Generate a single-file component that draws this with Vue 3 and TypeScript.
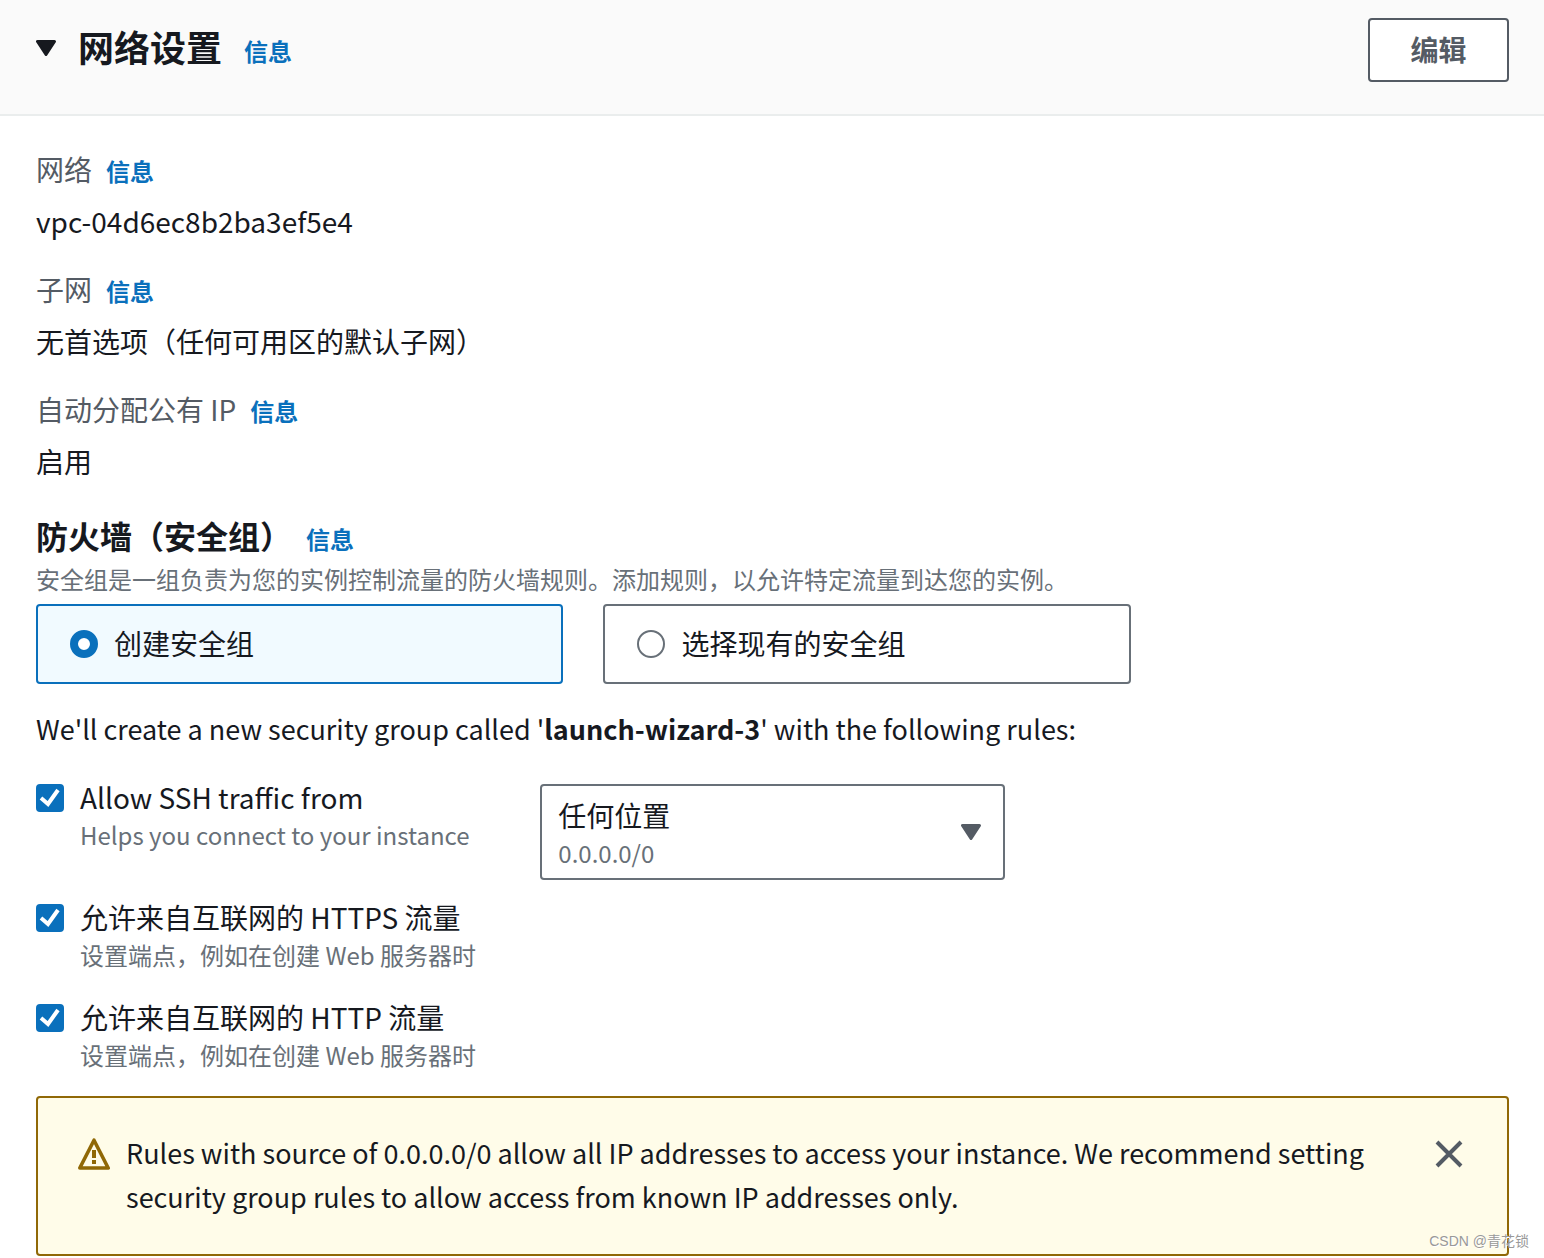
<script setup lang="ts">
import { ref } from 'vue'

interface Field {
  label: string
  value: string
}

interface TrafficRule {
  id: string
  title: string
  description: string
  hasSource: boolean
}

const fields: Field[] = [
  { label: '网络', value: 'vpc-04d6ec8b2ba3ef5e4' },
  { label: '子网', value: '无首选项（任何可用区的默认子网）' },
  { label: '自动分配公有 IP', value: '启用' },
]

const groupOptions = [
  { value: 'create', label: '创建安全组' },
  { value: 'existing', label: '选择现有的安全组' },
]

const rules: TrafficRule[] = [
  { id: 'ssh', title: 'Allow SSH traffic from', description: 'Helps you connect to your instance', hasSource: true },
  { id: 'https', title: '允许来自互联网的 HTTPS 流量', description: '设置端点，例如在创建 Web 服务器时', hasSource: false },
  { id: 'http', title: '允许来自互联网的 HTTP 流量', description: '设置端点，例如在创建 Web 服务器时', hasSource: false },
]

const group = ref('create')
const allowed = ref<string[]>(['ssh', 'https', 'http'])
const expanded = ref(true)
const showAlert = ref(true)
</script>

<template>
  <section class="panel">
    <header class="panel-header">
      <button class="toggle" type="button" aria-label="网络设置" :aria-expanded="expanded" @click="expanded = !expanded">
        <svg class="caret" viewBox="0 0 20 16" aria-hidden="true">
          <path d="M1.5 1.5h17L10 14.5z" fill="currentColor" stroke="currentColor" stroke-width="3" stroke-linejoin="round" />
        </svg>
      </button>
      <h2>网络设置</h2>
      <a class="info" href="#">信息</a>
      <button class="edit" type="button">编辑</button>
    </header>

    <div v-if="expanded" class="panel-body">
      <dl class="fields">
        <div v-for="field in fields" :key="field.label" class="field">
          <dt>{{ field.label }}<a class="info" href="#">信息</a></dt>
          <dd>{{ field.value }}</dd>
        </div>
      </dl>

      <div class="firewall-heading">
        <h3>防火墙（安全组）</h3>
        <a class="info" href="#">信息</a>
      </div>
      <p class="hint">安全组是一组负责为您的实例控制流量的防火墙规则。添加规则，以允许特定流量到达您的实例。</p>

      <div class="tiles" role="radiogroup" aria-label="防火墙（安全组）">
        <label v-for="option in groupOptions" :key="option.value" class="tile" :class="{ selected: group === option.value }">
          <input v-model="group" type="radio" name="group" :value="option.value" />
          <span>{{ option.label }}</span>
        </label>
      </div>

      <p class="summary">We'll create a new security group called '<b>launch-wizard-3</b>' with the following rules:</p>

      <div v-for="rule in rules" :key="rule.id" class="rule" :class="{ 'with-source': rule.hasSource }">
        <label class="check">
          <span class="box">
            <input v-model="allowed" type="checkbox" :value="rule.id" />
            <svg viewBox="0 0 28 28" aria-hidden="true">
              <path d="M5 14l7 6L22 6" fill="none" stroke="#fff" stroke-width="4" />
            </svg>
          </span>
          <span class="check-text">
            <span class="check-title">{{ rule.title }}</span>
            <span class="check-description">{{ rule.description }}</span>
          </span>
        </label>
        <div v-if="rule.hasSource" class="source">
          <select aria-label="Allow SSH traffic from">
            <option>任何位置</option>
          </select>
          <span class="source-detail">0.0.0.0/0</span>
          <svg class="caret" viewBox="0 0 20 16" aria-hidden="true">
            <path d="M1.5 1.5h17L10 14.5z" fill="currentColor" stroke="currentColor" stroke-width="3" stroke-linejoin="round" />
          </svg>
        </div>
      </div>

      <div v-if="showAlert" class="alert" role="alert">
        <svg class="warning" viewBox="0 0 32 32" aria-hidden="true">
          <path d="M16 2.2L30.2 30H1.8z" fill="none" stroke="currentColor" stroke-width="3.6" stroke-linejoin="round" />
          <path d="M16 12v8M16 22v4" fill="none" stroke="currentColor" stroke-width="4" />
        </svg>
        <p>Rules with source of 0.0.0.0/0 allow all IP addresses to access your instance. We recommend setting security group rules to allow access from known IP addresses only.</p>
        <button class="close" type="button" aria-label="Close" @click="showAlert = false">
          <svg viewBox="0 0 28 28" aria-hidden="true">
            <path d="M2 2l24 24M26 2L2 26" fill="none" stroke="currentColor" stroke-width="4" />
          </svg>
        </button>
      </div>
    </div>
    <span class="credit">CSDN @青花锁</span>
  </section>
</template>

<style>
body {
  margin: 0;
  background: #fff;
}
</style>

<style scoped>
.panel {
  --blue: #0a70bc;
  position: relative;
  padding-bottom: 2px;
  color: #16191f;
  font: 28px/44px "Noto Sans CJK SC", sans-serif;
}

.panel * {
  box-sizing: border-box;
}

h2,
h3,
p,
dl,
dd {
  margin: 0;
}

button,
select {
  font: inherit;
  cursor: pointer;
}

.panel-header {
  display: flex;
  align-items: flex-start;
  padding: 18px 35px 30px 36px;
  border-bottom: 2px solid #eaeded;
  background: #fafafa;
}

.toggle {
  display: flex;
  align-items: center;
  height: 60px;
  padding: 0;
  border: 0;
  background: none;
  color: #16191f;
}

.caret {
  display: block;
  width: 20px;
  height: 16px;
}

h2 {
  margin: 0 22px;
  font-size: 36px;
  line-height: 56px;
}

.info {
  color: var(--blue);
  font-size: 24px;
  font-weight: 700;
  line-height: 24px;
  text-decoration: none;
}

.panel-header .info {
  line-height: 66px;
}

.edit {
  min-width: 141px;
  height: 64px;
  margin-left: auto;
  padding: 0 40px 2px;
  border: 2px solid #545b64;
  border-radius: 4px;
  background: #fff;
  color: #545b64;
  font-weight: 700;
}

.panel-body {
  padding: 31px 35px 0 36px;
}

.field {
  margin-bottom: 24px;
}

dt {
  margin-bottom: 8px;
  color: #545b64;
}

dt .info {
  margin-left: 14px;
}

.firewall-heading {
  display: flex;
  align-items: baseline;
  gap: 14px;
  margin: 30px 0 2px;
}

h3 {
  font-size: 32px;
  line-height: 44px;
}

.hint {
  color: #687078;
  font-size: 24px;
  line-height: 40px;
}

.tiles {
  display: grid;
  grid-template-columns: 1fr 1fr;
  gap: 40px;
  width: calc(75% - 10px);
  margin: 5px 0 23px;
}

.tile {
  display: flex;
  align-items: center;
  gap: 16px;
  height: 80px;
  padding: 0 32px;
  border: 2px solid #687078;
  border-radius: 4px;
}

.tile.selected {
  border-color: var(--blue);
  background: #f1faff;
}

.tile input {
  appearance: none;
  flex: none;
  width: 28px;
  height: 28px;
  margin: 0;
  border: 2px solid #687078;
  border-radius: 50%;
  background: #fff;
}

.tile input:checked {
  border: 8px solid var(--blue);
}

.tile span {
  padding-bottom: 2px;
}

.rule {
  display: grid;
  grid-template-columns: repeat(3, 1fr);
  column-gap: 40px;
  margin-bottom: 24px;
}

.summary {
  margin-bottom: 25px;
  font-size: 27px;
}

.rule.with-source {
  margin-bottom: 16px;
}

.check {
  display: flex;
  align-items: flex-start;
  gap: 16px;
}

.box {
  display: grid;
  flex: none;
  margin-top: 8px;
}

.box input,
.box svg {
  grid-area: 1 / 1;
  width: 28px;
  height: 28px;
  margin: 0;
}

.box input {
  appearance: none;
  border: 2px solid #687078;
  border-radius: 4px;
}

.box input:checked {
  border-color: var(--blue);
  background: var(--blue);
}

.box svg {
  pointer-events: none;
}

.check-text {
  display: flex;
  flex-direction: column;
  white-space: nowrap;
}

.check-title {
  line-height: 42px;
}

.check-description {
  color: #687078;
  font-size: 24px;
  line-height: 34px;
}

.source {
  display: grid;
  margin-top: 8px;
}

.source > * {
  grid-area: 1 / 1;
}

.source select {
  appearance: none;
  width: 100%;
  height: 96px;
  padding: 0 56px 34px 16px;
  border: 2px solid #687078;
  border-radius: 4px;
  background: #fff;
  color: #16191f;
}

.source-detail {
  align-self: end;
  padding: 0 0 9px 18px;
  color: #687078;
  font-size: 24px;
  line-height: 36px;
  pointer-events: none;
}

.source .caret {
  place-self: center end;
  margin-right: 24px;
  color: #545b64;
  pointer-events: none;
}

.alert {
  display: flex;
  align-items: flex-start;
  padding: 33px 40px 35px;
  border: 2px solid #906806;
  border-radius: 4px;
  background: #fffce9;
}

.warning {
  flex: none;
  width: 32px;
  height: 32px;
  margin: 7px 16px 0 0;
  color: #906806;
}

.alert p {
  flex: 1;
  font-size: 27px;
}

.close {
  display: flex;
  align-items: center;
  height: 46px;
  margin-left: 24px;
  padding: 0 4px;
  border: 0;
  background: none;
  color: #545b64;
}

.close svg {
  width: 28px;
  height: 28px;
}

.credit {
  position: absolute;
  right: 15px;
  bottom: 6px;
  color: #999;
  font-family: "Liberation Sans", "Noto Sans CJK SC", sans-serif;
  font-size: 14px;
  line-height: 22px;
  text-shadow: 1px 1px 0 #fff;
}
</style>
